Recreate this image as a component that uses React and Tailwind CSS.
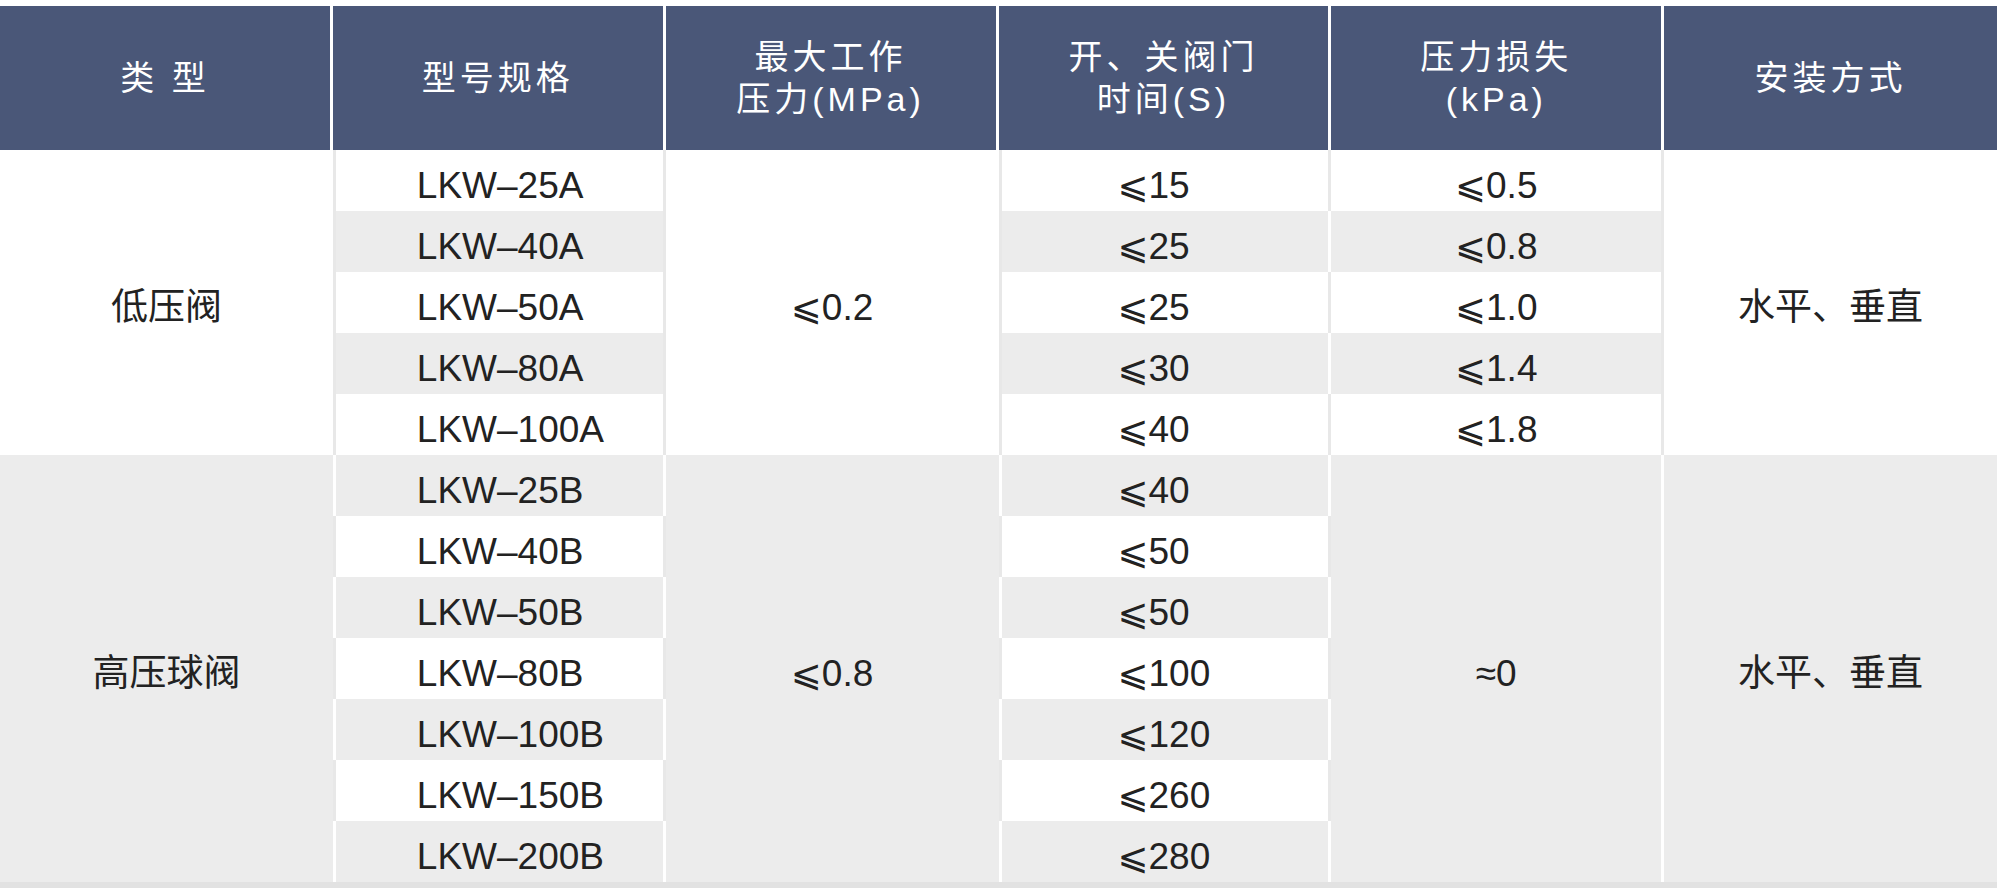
const GREY = 'bg-[#ececec]';

const headers = [
  ['类 型'],
  ['型号规格'],
  ['最大工作', '压力(MPa)'],
  ['开、关阀门', '时间(S)'],
  ['压力损失', '(kPa)'],
  ['安装方式'],
];

const rowsA = [
  ['LKW–25A', '⩽15', '⩽0.5'],
  ['LKW–40A', '⩽25', '⩽0.8'],
  ['LKW–50A', '⩽25', '⩽1.0'],
  ['LKW–80A', '⩽30', '⩽1.4'],
  ['LKW–100A', '⩽40', '⩽1.8'],
];

const rowsB = [
  ['LKW–25B', '⩽40'],
  ['LKW–40B', '⩽50'],
  ['LKW–50B', '⩽50'],
  ['LKW–80B', '⩽100'],
  ['LKW–100B', '⩽120'],
  ['LKW–150B', '⩽260'],
  ['LKW–200B', '⩽280'],
];

function Cell({ children, className = '' }) {
  return (
    <div className={`flex items-center pt-[11px] text-[37px] text-[#222] ${className}`}>
      {children}
    </div>
  );
}

export default function App() {
  const body = [];

  // 低压阀 group (rows 1-5)
  rowsA.forEach(([model, time, loss], i) => {
    const even = i % 2 === 1;
    const bg = even ? GREY : 'bg-white';
    if (i === 0) {
      body.push(
        <Cell key="a-type" className="row-span-5 justify-center bg-white">低压阀</Cell>
      );
    }
    body.push(
      <Cell
        key={`a-m-${i}`}
        className={`justify-start pl-[81px] border-x-[3px] border-[#e8e8e8] ${bg}`}
      >
        {model}
      </Cell>
    );
    if (i === 0) {
      body.push(
        <Cell key="a-p" className="row-span-5 justify-center bg-white">⩽0.2</Cell>
      );
    }
    body.push(
      <Cell
        key={`a-t-${i}`}
        className={`justify-start pl-[116px] border-l-[3px] border-r-[3px] border-l-[#e8e8e8] ${
          even ? 'border-r-white' : 'border-r-[#e8e8e8]'
        } ${bg}`}
      >
        {time}
      </Cell>
    );
    body.push(
      <Cell key={`a-l-${i}`} className={`justify-center border-r-[3px] border-[#e8e8e8] ${bg}`}>
        {loss}
      </Cell>
    );
    if (i === 0) {
      body.push(
        <Cell key="a-i" className="row-span-5 justify-center bg-white">水平、垂直</Cell>
      );
    }
  });

  // 高压球阀 group (rows 6-12)
  rowsB.forEach(([model, time], i) => {
    const grey = i % 2 === 0;
    const bg = grey ? GREY : 'bg-white';
    const sep = grey ? 'border-white' : 'border-[#e8e8e8]';
    if (i === 0) {
      body.push(
        <Cell key="b-type" className={`row-span-7 justify-center ${GREY}`}>高压球阀</Cell>
      );
    }
    body.push(
      <Cell key={`b-m-${i}`} className={`justify-start pl-[81px] border-x-[3px] ${sep} ${bg}`}>
        {model}
      </Cell>
    );
    if (i === 0) {
      body.push(
        <Cell key="b-p" className={`row-span-7 justify-center ${GREY}`}>⩽0.8</Cell>
      );
    }
    body.push(
      <Cell key={`b-t-${i}`} className={`justify-start pl-[116px] border-x-[3px] ${sep} ${bg}`}>
        {time}
      </Cell>
    );
    if (i === 0) {
      body.push(
        <Cell key="b-l" className={`row-span-7 justify-center border-r-[3px] border-white ${GREY}`}>
          ≈0
        </Cell>
      );
      body.push(
        <Cell key="b-i" className={`row-span-7 justify-center ${GREY}`}>水平、垂直</Cell>
      );
    }
  });

  return (
    <div className="w-[1997px] h-[888px] overflow-hidden bg-white pt-[6px] font-['Liberation_Sans','Noto_Sans_CJK_SC','DejaVu_Sans',sans-serif]">
      <div className="grid grid-cols-6 grid-rows-[144px_repeat(12,61px)]">
        {headers.map((lines, i) => (
          <div
            key={i}
            className={`flex flex-col items-center justify-center bg-[#4a5778] text-white text-[34px] leading-[42px] tracking-[4px] ${
              i < 5 ? 'border-r-[3px] border-white' : ''
            }`}
          >
            {lines.map((l) => (
              <span key={l}>{l}</span>
            ))}
          </div>
        ))}
        {body}
      </div>
      <div className="h-[6px] bg-[#e2e2e2]" />
    </div>
  );
}
